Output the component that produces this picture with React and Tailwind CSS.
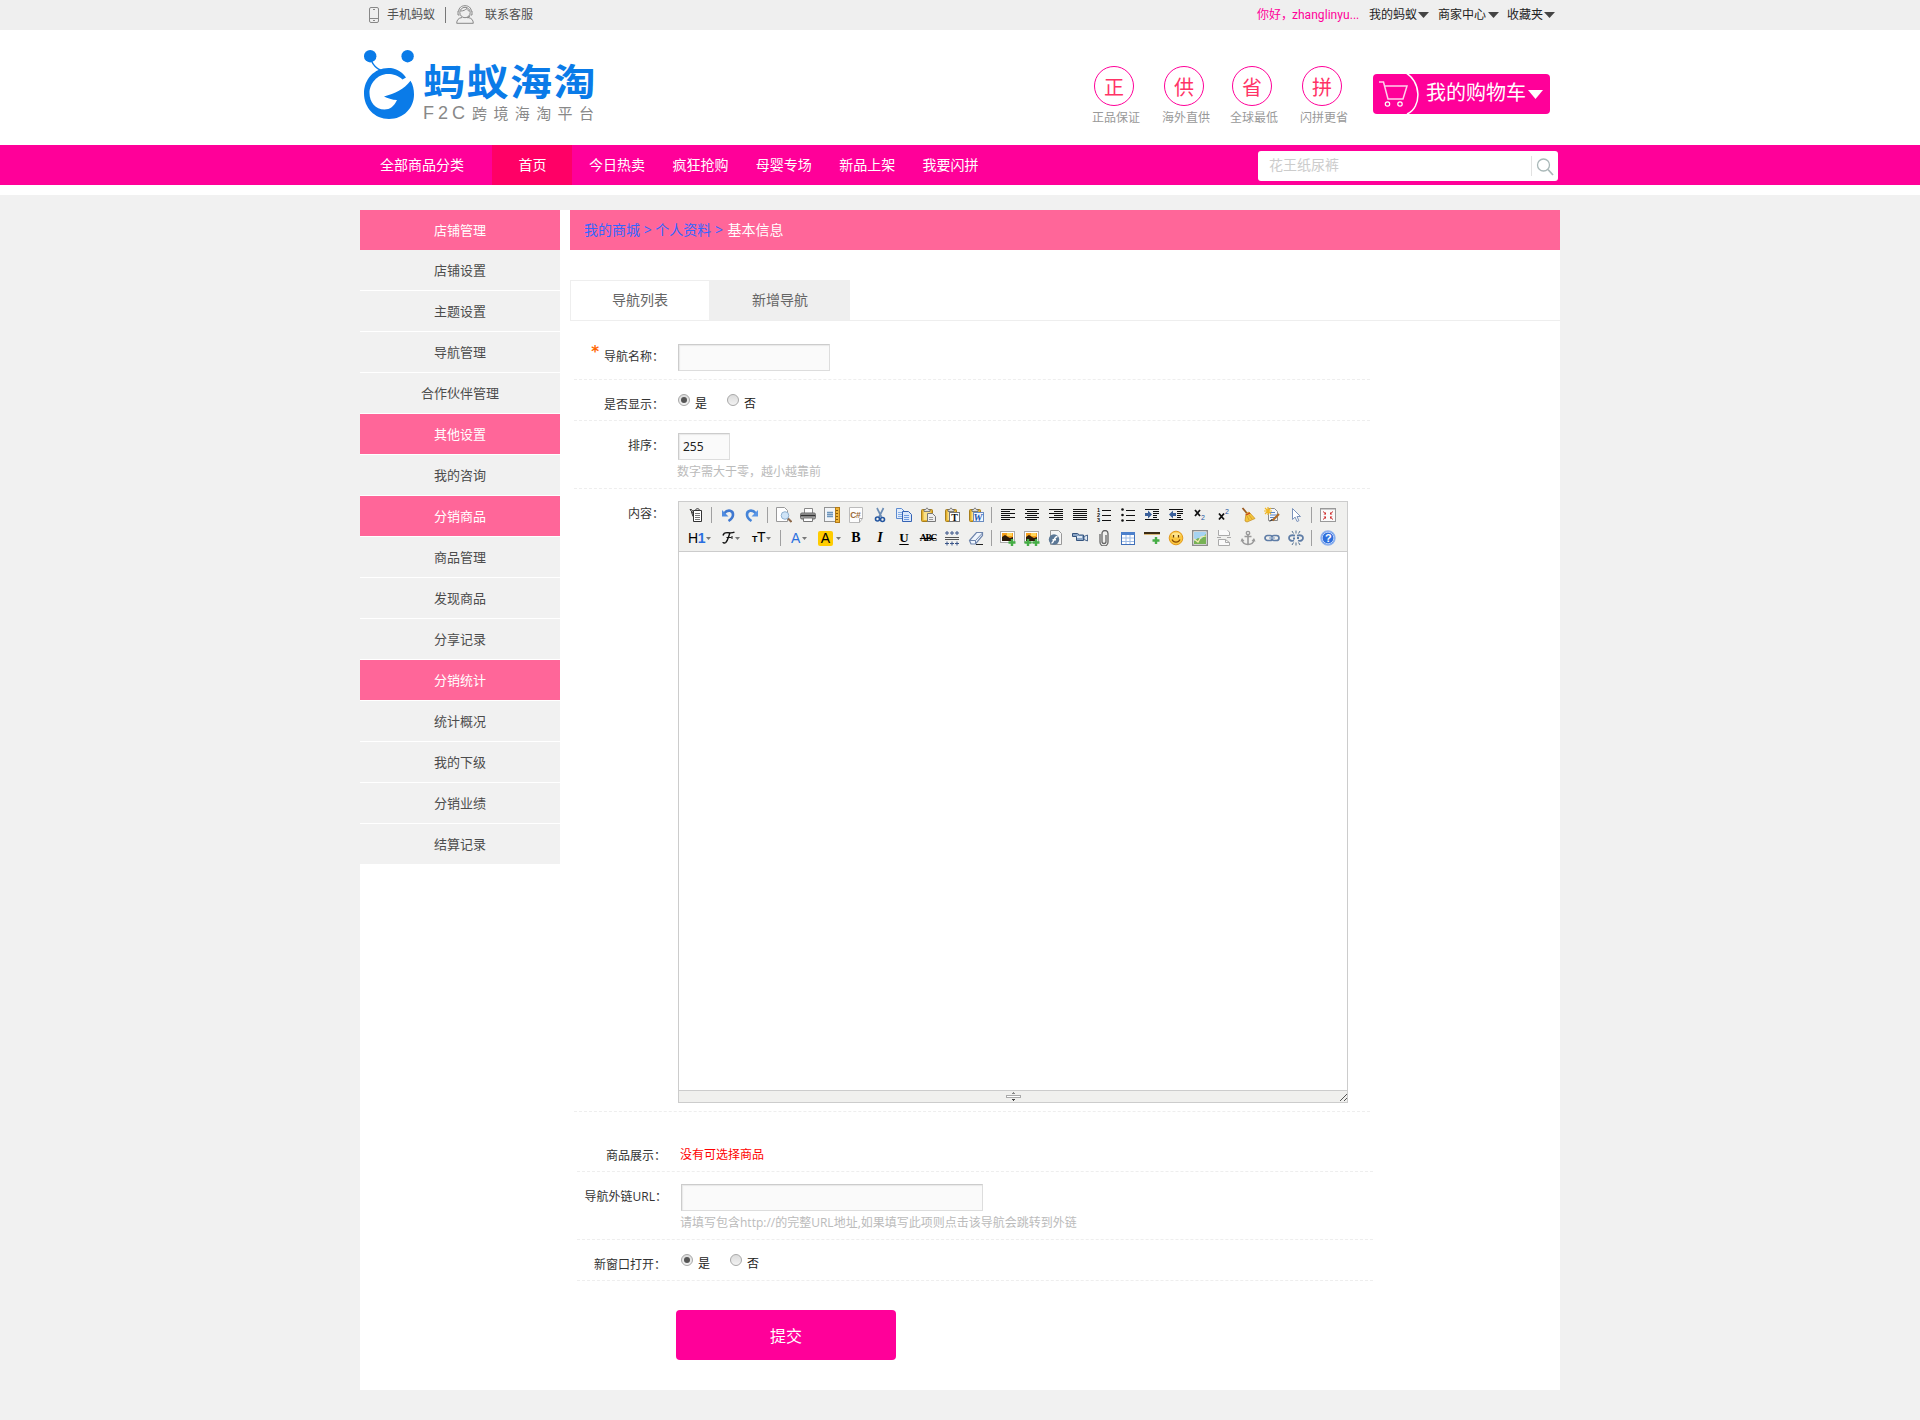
import React from 'react';

function Ico({ children, w = 16 }) {
  return (
    <svg width={w} height="16" viewBox={`0 0 ${w} 16`} fill="none" className="block shrink-0">
      {children}
    </svg>
  );
}

function Lines({ rows }) {
  return (
    <Ico>
      <g shapeRendering="crispEdges" fill="#111">
        {rows.map(([x, w], i) => (
          <rect key={i} x={x} y={2 + i * 2} width={w} height="1" />
        ))}
      </g>
    </Ico>
  );
}

function Clipboard({ children }) {
  return (
    <Ico>
      <rect x="1.5" y="2.5" width="11" height="12" rx="1" fill="#e3b02e" stroke="#a87f1c" />
      <rect x="3.5" y="4" width="7" height="9" fill="#f9e08a" />
      <path d="M4 4.5V2.500h1.500L7 .8l1.500 1.700H10v2z" fill="#ddd" stroke="#666" strokeWidth=".8" />
      {children}
    </Ico>
  );
}

function Page({ x = 2, y = 1, w = 10, h = 14, fill = '#fff', stroke = '#999' }) {
  return (
    <path
      d={`M${x + 0.5} ${y + 0.5}h${w - 4}l3 3v${h - 4}h${-(w - 1)}z`}
      fill={fill}
      stroke={stroke}
    />
  );
}

function Picture({ plus }) {
  return (
    <Ico>
      <rect x=".5" y="1.500" width="14" height="11" fill="#fff" stroke="#aaa" />
      <rect x="2" y="3" width="11" height="5" fill="#f6a01c" />
      <rect x="7" y="3" width="5" height="3" fill="#ffd65a" />
      <path d="M2 7l3-2 3 2 2 1 3-1v4H2z" fill="#2b1a08" />
      {plus.map((x) => (
        <path key={x} d={`M${x} 9v7M${x - 3.5} 12.500h7`} stroke="#45ad45" strokeWidth="2.400" />
      ))}
    </Ico>
  );
}

const icons = {
  source: (
    <Ico>
      <path d="M5.500 3.500h8v11h-8z" fill="#fff" stroke="#333" />
      <path d="M5.500 7L2 2.500h1.500L5.500 5M5 9.500L3.500 5" stroke="#333" />
      <path d="M7.500 3.500c0-2.500 4-2.500 4 0z" fill="#ddd" stroke="#333" />
      <path d="M7 6.500h5M7 8.500h5M7 10.500h5M7 12.500h5" stroke="#777" />
    </Ico>
  ),
  undo: (
    <Ico>
      <path d="M4 6.500C8 1.800 13.300 3.500 13 8c-.2 3-2 4.500-4.500 6" stroke="#3f78d0" strokeWidth="2.600" />
      <path d="M2 3v6.500h6.500z" fill="#4f8be0" />
    </Ico>
  ),
  redo: (
    <Ico>
      <path d="M12 6.500C8 1.800 2.700 3.500 3 8c.2 3 2 4.500 4.500 6" stroke="#4584d8" strokeWidth="2.600" />
      <path d="M14 3v6.500H7.500z" fill="#5a96e6" />
    </Ico>
  ),
  preview: (
    <Ico>
      <Page x={0} y={0} w={12} h={15} />
      <path d="M11.500 11l4 4" stroke="#8d6a4c" strokeWidth="2" />
      <circle cx="9" cy="8.500" r="3.800" fill="#cfe4f7" stroke="#8fb0cf" />
    </Ico>
  ),
  print: (
    <Ico>
      <path d="M4.500 6V1.500h8V6" fill="#fff" stroke="#888" />
      <rect x=".5" y="6" width="15" height="6" rx="1.500" fill="#a2a2a2" stroke="#666" />
      <path d="M1 8.500h14" stroke="#333" strokeWidth="1.500" />
      <path d="M3.500 11h9v3.500h-9z" fill="#fff" stroke="#777" />
    </Ico>
  ),
  template: (
    <Ico>
      <rect x=".5" y=".5" width="11" height="14" fill="#f2f5f8" stroke="#333" strokeDasharray="1 1" />
      <path d="M3 5.500h6M3 7.500h6M3 9.500h6" stroke="#6d96bd" strokeWidth="1.600" />
      <rect x="11.500" y=".5" width="4" height="15" fill="#efb437" stroke="#b27a17" />
      <path d="M12 3.500h2M12 6.500h2M12 9.500h2M12 12.500h2" stroke="#8b5c0b" />
    </Ico>
  ),
  code: (
    <Ico>
      <path d="M1.500 .5h13v11l-3 4h-10z" fill="#fdfdfd" stroke="#bbb" />
      <path d="M14.500 11.500h-3v4" stroke="#aaa" />
      <text x="2.200" y="10.500" fontSize="8.500" fontWeight="700" fontFamily="Liberation Sans" fill="#9a6a3a" letterSpacing="-.3">C#</text>
    </Ico>
  ),
  cut: (
    <Ico>
      <path d="M5 1l4.500 9M11.500 1L7 10" stroke="#6c8db5" strokeWidth="1.700" />
      <circle cx="5.500" cy="12" r="2" stroke="#2456a0" strokeWidth="1.600" />
      <circle cx="10.500" cy="12.500" r="2" stroke="#2456a0" strokeWidth="1.600" />
    </Ico>
  ),
  copy: (
    <Ico>
      <Page x={0} y={1} w={9} h={11} fill="#e4eefb" stroke="#5d8bd0" />
      <path d="M2 5.500h4M2 7.500h4M2 9.500h4" stroke="#86aee6" />
      <Page x={6} y={4} w={10} h={11} fill="#dbe8fb" stroke="#3563b4" />
      <path d="M8 8.500h5M8 10.500h5M8 12.500h5" stroke="#6f9be0" />
    </Ico>
  ),
  paste: (
    <Clipboard>
      <Page x={7} y={6} w={9} h={9} fill="#eee" stroke="#777" />
      <path d="M9 10.500h4M9 12.500h4" stroke="#999" />
    </Clipboard>
  ),
  pasteText: (
    <Clipboard>
      <rect x="5.500" y="5.500" width="10" height="9" fill="#fff" stroke="#777" />
      <text x="7.300" y="13.500" fontSize="10" fontWeight="700" fontFamily="Liberation Serif" fill="#111">T</text>
    </Clipboard>
  ),
  pasteWord: (
    <Clipboard>
      <rect x="5.500" y="5.500" width="10" height="9" fill="#f1f6ff" stroke="#6a8cc0" />
      <text x="5.500" y="13.500" fontSize="10" fontWeight="700" fontStyle="italic" fontFamily="Liberation Serif" fill="#1e56b0">W</text>
    </Clipboard>
  ),
  left: <Lines rows={[[1, 14], [1, 9], [1, 14], [1, 9], [1, 14], [1, 9]]} />,
  center: <Lines rows={[[1, 14], [3, 10], [1, 14], [3, 10], [1, 14], [3, 10]]} />,
  right: <Lines rows={[[1, 14], [6, 9], [1, 14], [6, 9], [1, 14], [6, 9]]} />,
  full: <Lines rows={[[1, 14], [1, 14], [1, 14], [1, 14], [1, 14], [1, 14]]} />,
  ol: (
    <Ico>
      <path d="M6 3.500h9M6 8.500h9M6 13.500h9" stroke="#111" shapeRendering="crispEdges" />
      <g fontSize="5.500" fontFamily="Liberation Sans" fontWeight="700" fill="#111">
        <text x="1" y="4.700">1</text>
        <text x="1" y="10">2</text>
        <text x="1" y="15.300">3</text>
      </g>
    </Ico>
  ),
  ul: (
    <Ico>
      <path d="M6 3.500h9M6 8.500h9M6 13.500h9" stroke="#111" shapeRendering="crispEdges" />
      <g fill="#111">
        <circle cx="2.500" cy="2.500" r="1.300" />
        <circle cx="2.500" cy="8" r="1.300" />
        <circle cx="2.500" cy="13.500" r="1.300" />
      </g>
    </Ico>
  ),
  indent: (
    <Ico>
      <path d="M1 2.500h14M9 4.500h6M9 6.500h6M9 8.500h4M9 10.500h4M1 12.500h14" stroke="#111" shapeRendering="crispEdges" />
      <path d="M1 6h3V3.500L8 7.500l-4 4V9H1z" fill="#3a5f9a" />
    </Ico>
  ),
  outdent: (
    <Ico>
      <path d="M1 2.500h14M9 4.500h6M9 6.500h6M9 8.500h4M9 10.500h4M1 12.500h14" stroke="#111" shapeRendering="crispEdges" />
      <path d="M8 6H5V3.500L1 7.500l4 4V9h3z" fill="#3a5f9a" />
    </Ico>
  ),
  sub: (
    <Ico>
      <path d="M3 3l5 6M8 3L3 9" stroke="#111" strokeWidth="1.800" />
      <text x="9" y="13" fontSize="7" fontFamily="Liberation Sans" fill="#2456a0">2</text>
    </Ico>
  ),
  sup: (
    <Ico>
      <path d="M3 6.500l5 6M8 6.500l-5 6" stroke="#111" strokeWidth="1.800" />
      <text x="9" y="7" fontSize="7" fontFamily="Liberation Sans" fill="#2456a0">2</text>
    </Ico>
  ),
  broom: (
    <Ico>
      <path d="M2.500 1l5 6" stroke="#9a5a20" strokeWidth="1.800" />
      <path d="M6 6.500l3-1.500 6 6.500-8 3.500-2-1z" fill="#f4c63a" stroke="#c8922a" strokeWidth=".8" />
      <path d="M6 8l4-2" stroke="#c23a22" strokeWidth="1.300" />
      <path d="M9 13l-2-4M12 12L9 8" stroke="#c8922a" strokeWidth=".7" />
    </Ico>
  ),
  quickformat: (
    <Ico>
      <Page x={4} y={1} w={10} h={13} fill="#f4f6fa" stroke="#8c8c8c" />
      <path d="M6 5.500h5M6 8h7M6 10.500h5" stroke="#5b86c4" />
      <path d="M4 0v8M0 4h8M1 1l6 6M7 1L1 7" stroke="#f2b823" strokeWidth="1.200" />
      <path d="M15 7l-6.500 6.500" stroke="#b06a25" strokeWidth="2.200" />
      <path d="M5 15l4-2-1.500-1z" fill="#333" />
    </Ico>
  ),
  cursor: (
    <Ico>
      <path d="M4.500 1.500v11l2.600-2.400 1.900 4.400 1.900-.8-1.900-4.200h3.500z" fill="#fff" stroke="#7b93bb" />
    </Ico>
  ),
  fullscreen: (
    <Ico>
      <rect x=".5" y="1.500" width="15" height="13" fill="#fafafa" stroke="#999" />
      <path d="M1 2.500h14" stroke="#ccc" />
      <path d="M3 4.500l3 2.500M13 4.500L10 7M3 12.500L6 10M13 12.500L10 10" stroke="#c33" />
      <path d="M6 5v2.500H3.500zM10 5v2.500h2.500zM6 12V9.500H3.500zM10 12V9.500h2.500z" fill="#d02a2a" />
    </Ico>
  ),
  hr: (
    <Ico>
      <path d="M1 7h14M1 9.500h14" stroke="#555" shapeRendering="crispEdges" />
      <path d="M3 1v4M1 3h4M8 1v4M6 3h4M13 1v4M11 3h4M3 11.500v4M1 13.500h4M8 11.500v4M6 13.500h4M13 11.500v4M11 13.500h4" stroke="#3a5588" />
    </Ico>
  ),
  eraser: (
    <Ico>
      <path d="M1.500 10.500L8.500 2.500h6v3l-7 8.500H3z" fill="#eef4fc" stroke="#6f86ad" strokeWidth="1.200" />
      <path d="M2 10.500h5.500l7-7.500M7.500 10.500v3.500" stroke="#6f86ad" />
      <path d="M8 14.500h7" stroke="#222" />
    </Ico>
  ),
  image: <Picture plus={[12]} />,
  multiimage: <Picture plus={[4, 12]} />,
  flash: (
    <Ico>
      <Page x={2} y={0} w={12} h={15} fill="#f6f6f6" />
      <circle cx="6" cy="9.500" r="5.200" fill="#5c7896" />
      <path d="M3.500 13c3 0 2-6.500 6-6.500M4.500 9.700h3.500" stroke="#fff" strokeWidth="1.400" />
    </Ico>
  ),
  media: (
    <Ico>
      <path d="M.5 3.500h5l2 1.500h4v5.500h-7V6.500h-4z" fill="#8ba6c6" stroke="#35547e" />
      <path d="M5 7h5" stroke="#dce8f5" strokeWidth="2" />
      <path d="M12 6.500l3.500-1.500v6L12 9.500z" fill="#dfe8f2" stroke="#4a678e" />
    </Ico>
  ),
  clip: (
    <Ico>
      <path d="M10 5v6.500a2 2 0 01-4 0V3.500a3 3 0 016 0V12a4 4 0 01-8 0V4" stroke="#666" strokeWidth="1.300" />
    </Ico>
  ),
  table: (
    <Ico>
      <rect x="1.500" y="2.500" width="13" height="12" fill="#fff" stroke="#3f6fb8" />
      <path d="M1 3.500h14" stroke="#4c80cc" strokeWidth="3" />
      <path d="M2 8h12M2 11.500h12M6 5v9M10 5v9" stroke="#9dbbe6" />
    </Ico>
  ),
  hrplus: (
    <Ico>
      <rect x="0" y="2" width="16" height="2" fill="#3a2b14" />
      <path d="M0 4.500h16" stroke="#d9b878" />
      <path d="M12 7v7M8.500 10.500h7" stroke="#45ad45" strokeWidth="2.400" />
    </Ico>
  ),
  smile: (
    <Ico>
      <circle cx="8" cy="8" r="6.800" fill="#fbc740" stroke="#e39a1c" />
      <ellipse cx="8" cy="5" rx="4.500" ry="2.500" fill="#fde48c" />
      <path d="M5.500 5v2.500M10.500 5v2.500" stroke="#6b3c00" strokeWidth="1.300" />
      <path d="M4 9.500c1.500 3.500 6.500 3.500 8 0" stroke="#8a4b00" strokeWidth="1.200" />
    </Ico>
  ),
  map: (
    <Ico>
      <rect x=".7" y=".7" width="14.600" height="14.600" fill="#fff" stroke="#8b8b8b" strokeWidth="1.400" />
      <rect x="2" y="2" width="12" height="12" fill="#a6d3f2" />
      <path d="M2 11l4-3 3 1 5-5v10H2z" fill="#77b255" />
      <path d="M2 9l4 3 3-5 5-1" stroke="#f2ecb0" strokeWidth="1.200" />
    </Ico>
  ),
  pagebreak: (
    <Ico>
      <path d="M2.500 0v5.500h11V2l-2-1.500" fill="#fafafa" stroke="#aaa" />
      <path d="M2.500 15.500v-6h7l4 3v3z" fill="#fafafa" stroke="#aaa" />
      <path d="M9.500 9.500v3h4M1 7.500h4M11 7.500h4" stroke="#aaa" />
    </Ico>
  ),
  anchor: (
    <Ico>
      <circle cx="8" cy="3" r="1.700" stroke="#999" strokeWidth="1.300" />
      <path d="M8 4.500v10M4.500 6.500h7M2 9.500c.5 3.500 3 5 6 5s5.500-1.500 6-5" stroke="#999" strokeWidth="1.600" />
      <path d="M.5 11.500L2 8l2.500 3zM15.500 11.500L14 8l-2.500 3z" fill="#999" />
    </Ico>
  ),
  link: (
    <Ico>
      <rect x="1" y="5.500" width="7.500" height="5" rx="2.500" stroke="#5f7da6" strokeWidth="1.700" />
      <rect x="7.500" y="5.500" width="7.500" height="5" rx="2.500" stroke="#5f7da6" strokeWidth="1.700" />
      <path d="M5 8h6" stroke="#9bb1cf" strokeWidth="1.400" />
    </Ico>
  ),
  unlink: (
    <Ico>
      <path d="M7 5.700C3 4.500 1 6 1 8s2 3.500 5 2.500M5 8.500h2M9 5.700C13 4.500 15 6 15 8s-2 3.500-5 2.500M9 8h2" stroke="#5f7da6" strokeWidth="1.800" />
      <path d="M8 .5v3M4 1l1.500 2.500M12 1l-1.500 2.500M8 12.500v3M4 15l1.500-2.500M12 15l-1.500-2.500" stroke="#55708f" />
    </Ico>
  ),
  help: (
    <Ico>
      <circle cx="8" cy="8" r="7" fill="#2f6fdc" stroke="#8db1ee" strokeWidth="1.400" />
      <circle cx="8" cy="8" r="5.800" stroke="#dce9ff" strokeWidth=".8" />
      <text x="5" y="12" fontSize="11" fontWeight="700" fontFamily="Liberation Sans" fill="#fff">?</text>
    </Ico>
  ),
};

const row1 = ['source', '|', 'undo', 'redo', '|', 'preview', 'print', 'template', 'code', 'cut', 'copy', 'paste', 'pasteText', 'pasteWord', '|', 'left', 'center', 'right', 'full', 'ol', 'ul', 'indent', 'outdent', 'sub', 'sup', 'broom', 'quickformat', 'cursor', '|', 'fullscreen'];
const row2 = ['hr', 'eraser', '|', 'image', 'multiimage', 'flash', 'media', 'clip', 'table', 'hrplus', 'smile', 'map', 'pagebreak', 'anchor', 'link', 'unlink', '|', 'help'];

function Tool({ name }) {
  if (name === '|') {
    return (
      <span className="flex h-4 w-2 shrink-0 pl-[3px]">
        <span className="h-4 w-px bg-[#a0a0a0]" />
      </span>
    );
  }
  return <span className="flex h-4 w-6 shrink-0 justify-center">{icons[name]}</span>;
}

function Drop() {
  return (
    <svg width="5" height="3" viewBox="0 0 5 3" className="shrink-0">
      <path d="M0 0h5L2.500 3z" fill="#777" />
    </svg>
  );
}

function Toolbar() {
  return (
    <div className="flex h-[50px] flex-col gap-[7px] border-b border-[#ccc] bg-[#f0f0ee] pl-[5px] pt-[5px]">
      <div className="flex h-4">
        {row1.map((n, i) => <Tool key={i} name={n} />)}
      </div>
      <div className="flex h-4 items-center font-['Liberation_Sans'] leading-4 text-black">
        <span className="flex w-[33px] shrink-0 items-center gap-[1px] pl-1 text-[14px]">
          <span className="w-[17px] tracking-[-0.5px]">H<span className="font-bold text-[#2a6fe0]">1</span></span>
          <Drop />
        </span>
        <span className="flex w-[30px] shrink-0 items-center pl-[5px]">
          <svg width="13" height="16" viewBox="0 0 13 16" fill="none" stroke="#111">
            <path d="M1 5.500C1.500 3 3.500 2.500 6 2.700c3 .3 5 .3 6.500-.7M8 3C6.500 6 6 10.500 3.800 12.500 2.500 13.500 1 13 1 12" strokeWidth="1.400" />
            <path d="M4.500 7.500h5M10 6v3" />
          </svg>
          <Drop />
        </span>
        <span className="flex w-[30px] shrink-0 items-center pl-[5px]">
          <span className="w-[14px] text-[14px] tracking-[-0.5px]"><span className="text-[9px] font-bold">T</span>T</span>
          <Drop />
        </span>
        <Tool name="|" />
        <span className="flex w-7 shrink-0 items-center gap-[2px] pl-[6px] text-[14px] text-[#2a6fe0]">
          <span>A</span>
          <Drop />
        </span>
        <span className="flex w-[31px] shrink-0 items-center gap-[3px] pl-[5px] text-[14px]">
          <span className="h-[15px] w-[15px] rounded-[2px] bg-[#fc0] text-center leading-[15px]">A</span>
          <Drop />
        </span>
        <span className="w-6 shrink-0 text-center font-['Liberation_Serif'] text-[14px] font-bold">B</span>
        <span className="w-6 shrink-0 text-center font-['Liberation_Serif'] text-[14px] font-bold italic">I</span>
        <span className="w-6 shrink-0 text-center font-['Liberation_Serif'] text-[13px] font-bold underline underline-offset-2">U</span>
        <span className="w-6 shrink-0 text-center font-['Liberation_Serif'] text-[9.500px] font-bold tracking-[-1.200px] line-through decoration-1">ABC</span>
        {row2.map((n, i) => <Tool key={i} name={n} />)}
      </div>
    </div>
  );
}

function Editor() {
  return (
    <div className="flex h-[602px] w-[670px] flex-col border border-[#ccc] bg-white">
      <Toolbar />
      <div className="flex-1" />
      <div className="flex h-3 items-center border-t border-[#ccc] bg-[#f0f0ee]">
        <div className="flex flex-1 justify-center">
          <svg width="15" height="9" viewBox="0 0 15 9" shapeRendering="crispEdges">
            <path d="M7 0h1v1h1v1H6V1h1z" fill="#888" />
            <rect x=".5" y="3.500" width="14" height="2" fill="#fff" stroke="#aaa" />
            <path d="M6 7h3v1H8v1H7V8H6z" fill="#444" />
          </svg>
        </div>
        <svg width="8" height="9" viewBox="0 0 8 9" className="-ml-2 shrink-0" stroke="#555">
          <path d="M1 9l7-7M5 9l3-3" />
        </svg>
      </div>
    </div>
  );
}

const side = [
  ['店铺管理', 1], ['店铺设置'], ['主题设置'], ['导航管理'], ['合作伙伴管理'],
  ['其他设置', 1], ['我的咨询'], ['分销商品', 1], ['商品管理'], ['发现商品'],
  ['分享记录'], ['分销统计', 1], ['统计概况'], ['我的下级'], ['分销业绩'], ['结算记录'],
];

function Sidebar() {
  return (
    <div className="flex w-[200px] shrink-0 flex-col text-[13px] leading-10 text-center">
      {side.map(([t, hot], i) => (
        <div
          key={t}
          className={`${hot ? 'bg-[#ff6699] text-white' : 'bg-[#f1f1f1] text-[#4c4c4c]'} h-10 ${i > 1 ? 'mt-px' : ''}`}
        >
          {t}
        </div>
      ))}
    </div>
  );
}

function Caret({ className }) {
  return (
    <svg width="11" height="6" viewBox="0 0 11 6" className={`${className} shrink-0`}>
      <path d="M0 0h11L5.500 6z" fill="#444" />
    </svg>
  );
}

function TopBar() {
  return (
    <div className="h-[30px] bg-[#efefef] text-[12px] leading-[30px] text-[#505050]">
      <div className="mx-auto flex h-[30px] w-[1200px] items-center whitespace-nowrap">
        <svg width="10" height="16" viewBox="0 0 10 16" fill="none" stroke="#888" className="ml-[9px]">
          <rect x=".5" y=".5" width="9" height="15" rx="1.500" />
          <path d="M1 11.500h8M4 2.500h2M4 13.500h2" />
        </svg>
        <span className="ml-2">手机蚂蚁</span>
        <span className="ml-[10px] h-4 w-px bg-[#777]" />
        <svg width="18" height="19" viewBox="0 0 18 19" fill="none" stroke="#888" className="ml-[10px] -mt-[2px]">
          <circle cx="9" cy="7.500" r="5.200" />
          <path d="M2.500 6.500C3 2.500 5.500.7 9 .7s6 1.800 6.500 5.800" />
          <path d="M2 6v4h1.500M16 6v4h-1.500M14 11l-3 2M6 12.500C2.500 13 .7 15 .7 18.300h16.600c0-3.300-1.800-5.300-5.300-5.800" />
          <path d="M4.500 6c3 0 5-1 6-2.500.5 1.500 2 2.500 3 2.500" />
        </svg>
        <span className="ml-[11px]">联系客服</span>
        <span className="ml-auto flex w-[112px] text-[#ff0099]">
          <span className="w-[35px]">你好，</span>
          <span className="font-[Roboto,sans-serif] text-[12px] tracking-[0.05px]">zhanglinyu...</span>
        </span>
        <span className="text-[#222]">我的蚂蚁</span>
        <Caret className="ml-px mr-[9px]" />
        <span className="text-[#222]">商家中心</span>
        <Caret className="ml-[2px] mr-[8px]" />
        <span className="text-[#222]">收藏夹</span>
        <Caret className="ml-px mr-[5px]" />
      </div>
    </div>
  );
}

function Logo() {
  return (
    <div className="flex pl-[4px] pt-[20px]">
      <svg width="50" height="70" viewBox="0 0 50 70" fill="none">
        <circle cx="6.200" cy="6.200" r="6.200" fill="#0a7be8" />
        <circle cx="43.600" cy="6.200" r="6.200" fill="#0a7be8" />
        <path d="M7.500 11c2 4.500 5 7.500 9.500 9.500" stroke="#0a7be8" strokeWidth="1.500" />
        <path
          d="M42 27.500C37 20.500 31 18 24.500 18 10 18 0 29.500 0 43.500S10.500 69 25 69s25-11 25-24.500c0-5-1-10-3.500-13.800C40 39.500 31 43.500 20 46.500c3.500 1.500 8 3.500 13 3.500-3 6.500-7 9.500-12.500 9.500C11.500 59.500 5.500 52 5.500 43S13 24 24 24c5.500 0 10 1.500 14.500 5.500z"
          fill="#0a7be8"
        />
      </svg>
      <div className="ml-[9px] flex flex-col">
        <div className="mt-[12px] h-[40px] origin-center scale-y-[0.88] whitespace-nowrap text-[42px] font-bold leading-[40px] tracking-[1.500px] text-[#0a7be8]">
          蚂蚁海淘
        </div>
        <div className="mt-[1px] flex text-[15px] leading-[20px] text-[#888]">
          <span className="w-[15px] font-['Liberation_Sans'] text-[18px]">F</span>
          <span className="w-[14px] font-['Liberation_Sans'] text-[18px]">2</span>
          <span className="w-[20px] font-['Liberation_Sans'] text-[18px]">C</span>
          <span className="whitespace-nowrap tracking-[6.400px]">跨境海淘平台</span>
        </div>
      </div>
    </div>
  );
}

function Header() {
  return (
    <div className="mx-auto flex h-[115px] w-[1200px] items-start">
      <Logo />
      <div className="ml-auto flex pt-9">
        {[['正', '正品保证', 'mr-[22px]'], ['供', '海外直供', 'mr-[20px]'], ['省', '全球最低', 'mr-[22px]'], ['拼', '闪拼更省', 'mr-[25px]']].map(([c, t, m]) => (
          <div key={c} className={`w-12 ${m}`}>
            <div className="ml-[2px] h-10 w-10 rounded-full border border-[#ff0099] text-center text-[20px] leading-[41px] text-[#ff3366]">{c}</div>
            <div className="whitespace-nowrap text-[12px] leading-6 text-[#999]">{t}</div>
          </div>
        ))}
      </div>
      <div className="mr-[10px] mt-[44px] flex h-10 w-[177px] items-center rounded bg-[#ff0099] text-[20px] text-white">
        <svg width="50" height="40" viewBox="0 0 50 40" fill="none" stroke="#fff">
          <path d="M31 -2c18 8 18 36 3 42" strokeWidth="1.500" />
          <path d="M6 8h4.500l4.500 17h15l4-13H12" stroke="#ffd0ec" strokeWidth="1.500" />
          <circle cx="14.500" cy="30" r="2.200" strokeWidth="1.200" />
          <circle cx="27" cy="30" r="2.200" strokeWidth="1.200" />
        </svg>
        <span className="-mt-[2px] ml-[3px] leading-10">我的购物车</span>
        <svg width="15" height="9" viewBox="0 0 15 9" className="ml-[2px]">
          <path d="M0 0h15L7.500 9z" fill="#fff" />
        </svg>
      </div>
    </div>
  );
}

function Nav() {
  return (
    <div className="h-10 bg-[#ff0099] text-[14px] leading-10 text-white">
      <div className="mx-auto flex w-[1200px]">
        <div className="w-[132px] pl-5">全部商品分类</div>
        <div className="w-20 bg-[#ff0066] pl-px text-center">首页</div>
        <div className="ml-[17px] flex gap-[27.400px]">
          {['今日热卖', '疯狂抢购', '母婴专场', '新品上架', '我要闪拼'].map((t) => <span key={t}>{t}</span>)}
        </div>
        <div className="ml-auto mr-[2px] mt-[6px] flex h-[30px] w-[300px] items-center rounded-[3px] bg-white pl-[11px] leading-[28px] text-[#ccc]">
          <span className="-mt-[2px] flex-1">花王纸尿裤</span>
          <span className="h-5 w-px bg-[#e2e2e2]" />
          <svg width="26" height="30" viewBox="0 0 26 30" fill="none" stroke="#a9b8b8" strokeWidth="1.300">
            <circle cx="11.500" cy="14" r="6" />
            <path d="M16 18.500l5 5.500" strokeWidth="1.700" />
          </svg>
        </div>
      </div>
    </div>
  );
}

function Radio({ on }) {
  return (
    <span className="flex h-3 w-3 shrink-0 items-center justify-center rounded-full border border-[#a8a8a8] bg-linear-to-b from-[#dcdcdc] to-[#f2f2f2]">
      {on && <span className="h-[6px] w-[6px] rounded-full bg-[#555]" />}
    </span>
  );
}

function YesNo() {
  return (
    <div className="flex text-[12px] leading-[26px] text-[#222]">
      <span className="pt-[3px]"><Radio on /></span>
      <span className="ml-[5px]">是</span>
      <span className="ml-[20px] pt-[3px]"><Radio /></span>
      <span className="ml-[5px]">否</span>
    </div>
  );
}

function Box({ className, children }) {
  return (
    <div className={`${className} h-[27px] border border-b-[#ddd] border-l-[#ccc] border-r-[#ddd] border-t-[#ccc] bg-[#fafafa] shadow-[inset_1px_1px_1px_#e8e8e8]`}>
      {children}
    </div>
  );
}

function Row({ label, className, labelClass = 'w-[90px] mr-[14px]', star, children }) {
  return (
    <div className={`${className} flex w-[796px] border-b border-dashed border-[#eee]`}>
      <div className={`${labelClass} flex shrink-0 justify-end whitespace-nowrap text-[12px] leading-[26px] text-[#333]`}>
        {star && <span className="-mt-[5px] mr-[5px] font-['DejaVu_Sans'] text-[15px] font-bold text-[#ff6600]">*</span>}
        {label}
      </div>
      <div>{children}</div>
    </div>
  );
}

function Content() {
  return (
    <div className="ml-[10px] w-[990px]">
      <div className="h-10 bg-[#ff6699] pl-[14px] text-[14px] leading-10 text-white">
        <span className="text-[#3366ff]">我的商城 &gt; 个人资料 &gt; </span><span className="ml-px">基本信息</span>
      </div>
      <div className="mt-[30px] flex h-[41px] border-b border-[#eee] text-center text-[14px] leading-10 text-[#666]">
        <div className="w-[139px] border-l border-t border-[#eee] leading-[38px]">导航列表</div>
        <div className="w-[141px] bg-[#efefef] pl-px">新增导航</div>
      </div>
      <div className="pl-1">
        <Row label="导航名称：" star className="h-[59px] pt-[23px]">
          <Box className="w-[152px]" />
        </Row>
        <Row label="是否显示：" className="h-[41px] pt-[11px]" labelClass="mt-px w-[90px] mr-[14px]">
          <YesNo />
        </Row>
        <Row label="排序：" className="h-[68px] pt-[12px]">
          <Box className="w-[52px]">
            <span className="block pl-1 font-['Noto_Sans'] text-[12px] leading-[26px] text-[#222]">255</span>
          </Box>
          <div className="-ml-px text-[12px] leading-[24px] text-[#bbb]">数字需大于零，越小越靠前</div>
        </Row>
        <Row label="内容：" className="h-[623px] pt-[12px]">
          <Editor />
        </Row>
      </div>
      <div className="pl-[7px]">
        <Row label="商品展示：" className="h-[60px] pt-[30px]" labelClass="mt-px w-[89px] mr-[14px]">
          <div className="text-[12px] leading-[26px] text-[#f00]">没有可选择商品</div>
        </Row>
        <Row label="导航外链URL：" className="h-[68px] pt-[12px]" labelClass="w-[90px] mr-[14px]">
          <Box className="w-[302px]" />
          <div className="-ml-px whitespace-nowrap text-[12px] leading-[24px] text-[#bbb]">
            请填写包含http://的完整URL地址,如果填写此项则点击该导航会跳转到外链
          </div>
        </Row>
        <Row label="新窗口打开：" className="h-[41px] pt-[11px]" labelClass="mt-px w-[89px] mr-[15px]">
          <YesNo />
        </Row>
      </div>
      <button className="ml-[106px] mt-[29px] block h-[50px] w-[220px] rounded bg-[#ff0099] pt-[2px] text-[16px] text-white">提交</button>
    </div>
  );
}

export default function App() {
  return (
    <div className="min-h-[1420px] bg-[#f1f1f1] font-['Open_Sans','Noto_Sans_CJK_SC',sans-serif]">
      <TopBar />
      <div className="bg-white pb-[10px]">
        <Header />
        <Nav />
      </div>
      <div className="mx-auto mt-[15px] flex h-[1180px] w-[1200px] bg-white">
        <Sidebar />
        <Content />
      </div>
    </div>
  );
}
